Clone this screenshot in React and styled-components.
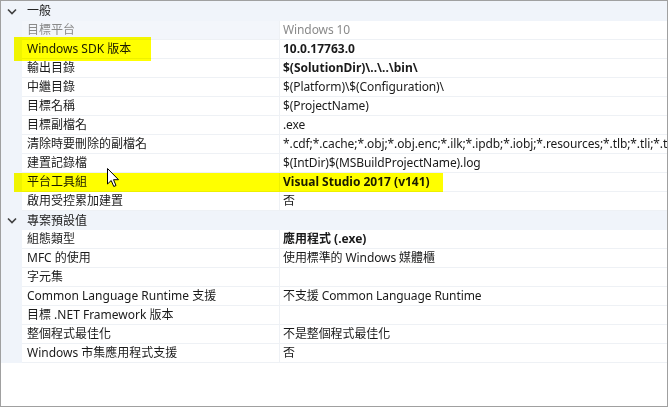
import React from "react";
import styled, { createGlobalStyle } from "styled-components";

const Global = createGlobalStyle`
  html, body { margin: 0; padding: 0; background: #fff; }
  body { font-family: "Noto Sans", "Noto Sans CJK TC", sans-serif; }
`;

const Frame = styled.div`
  position: relative;
  width: 668px;
  height: 407px;
  box-sizing: border-box;
  border: 1px solid #a0a0a0;
  background: #fff;
  overflow: hidden;
  font-family: "Noto Sans", "Noto Sans CJK TC", sans-serif;
  font-size: 12px;
  color: #1a1a1a;
`;

const Grid = styled.div`
  display: flex;
  flex-direction: column;
`;

const HeaderRow = styled.div`
  display: grid;
  grid-template-columns: 21px 1fr;
  height: ${(p) => (p.$first ? 20 : 19)}px;
  background: #f0f4fa;
  align-items: center;
`;

const Chevron = styled.span`
  display: flex;
  justify-content: center;
  align-items: center;
  padding-left: 1px;
`;

const HeaderText = styled.span`
  padding-left: 5px;
  line-height: 18px;
`;

const Row = styled.div`
  display: grid;
  grid-template-columns: 21px 258px 1fr;
  height: 19px;
  box-sizing: border-box;
`;

const Gutter = styled.div`
  background: #f0f4fa;
`;

const NameCell = styled.div`
  box-sizing: border-box;
  border-right: 1px solid #eef1f5;
  border-bottom: 1px solid #eef1f5;
  padding-left: 5px;
  line-height: 18px;
  white-space: nowrap;
  overflow: hidden;
  background: ${(p) => (p.$disabled ? "#f3f6fb" : "#fff")};
  color: ${(p) => (p.$disabled ? "#8a8a8a" : "#1a1a1a")};
`;

const ValueCell = styled.div`
  box-sizing: border-box;
  border-bottom: 1px solid #eef1f5;
  padding-left: 3px;
  line-height: 18px;
  white-space: nowrap;
  overflow: hidden;
  letter-spacing: ${(p) => (p.$bold ? "0" : "-0.1px")};
  font-weight: ${(p) => (p.$bold ? 700 : 400)};
  color: ${(p) => (p.$disabled ? "#8a8a8a" : "#1a1a1a")};
`;

const Highlight = styled.div`
  position: absolute;
  background: #ffff00;
  mix-blend-mode: multiply;
  pointer-events: none;
`;

const Cursor = styled.svg`
  position: absolute;
  left: 106px;
  top: 167px;
`;

const sections = [
  {
    title: "一般",
    rows: [
      { name: "目標平台", value: "Windows 10", disabled: true },
      { name: "Windows SDK 版本", value: "10.0.17763.0", bold: true },
      { name: "輸出目錄", value: "$(SolutionDir)\\..\\..\\bin\\", bold: true },
      { name: "中繼目錄", value: "$(Platform)\\$(Configuration)\\" },
      { name: "目標名稱", value: "$(ProjectName)" },
      { name: "目標副檔名", value: ".exe" },
      {
        name: "清除時要刪除的副檔名",
        value:
          "*.cdf;*.cache;*.obj;*.obj.enc;*.ilk;*.ipdb;*.iobj;*.resources;*.tlb;*.tli;*.tlh;*.tmp;*.rsp;*.pgc;*.pgd",
      },
      { name: "建置記錄檔", value: "$(IntDir)$(MSBuildProjectName).log" },
      { name: "平台工具組", value: "Visual Studio 2017 (v141)", bold: true },
      { name: "啟用受控累加建置", value: "否" },
    ],
  },
  {
    title: "專案預設值",
    rows: [
      { name: "組態類型", value: "應用程式 (.exe)", bold: true },
      { name: "MFC 的使用", value: "使用標準的 Windows 媒體櫃" },
      { name: "字元集", value: "" },
      { name: "Common Language Runtime 支援", value: "不支援 Common Language Runtime" },
      { name: "目標 .NET Framework 版本", value: "" },
      { name: "整個程式最佳化", value: "不是整個程式最佳化" },
      { name: "Windows 市集應用程式支援", value: "否" },
    ],
  },
];

export default function App() {
  return (
    <>
      <Global />
      <Frame>
        <Grid>
          {sections.map((s, si) => (
            <React.Fragment key={s.title}>
              <HeaderRow $first={si === 0}>
                <Chevron>
                  <svg width="10" height="7" viewBox="0 0 10 7">
                    <path d="M1 1.5 L5 5.5 L9 1.5" fill="none" stroke="#404040" strokeWidth="1.6" />
                  </svg>
                </Chevron>
                <HeaderText>{s.title}</HeaderText>
              </HeaderRow>
              {s.rows.map((r) => (
                <Row key={r.name}>
                  <Gutter />
                  <NameCell $disabled={r.disabled}>{r.name}</NameCell>
                  <ValueCell $bold={r.bold} $disabled={r.disabled}>
                    {r.value}
                  </ValueCell>
                </Row>
              ))}
            </React.Fragment>
          ))}
        </Grid>
        <Highlight style={{ left: 13, top: 36, width: 137, height: 24 }} />
        <Highlight style={{ left: 13, top: 172, width: 429, height: 19 }} />
        <Cursor width="14" height="20" viewBox="0 0 14 20">
          <path
            d="M0.5 0.5 L0.5 16 L4.2 12.5 L6.8 18.5 L9 17.5 L6.5 11.7 L11.5 11.7 Z"
            fill="#fff"
            stroke="#000"
            strokeWidth="1"
            strokeLinejoin="miter"
          />
        </Cursor>
      </Frame>
    </>
  );
}
